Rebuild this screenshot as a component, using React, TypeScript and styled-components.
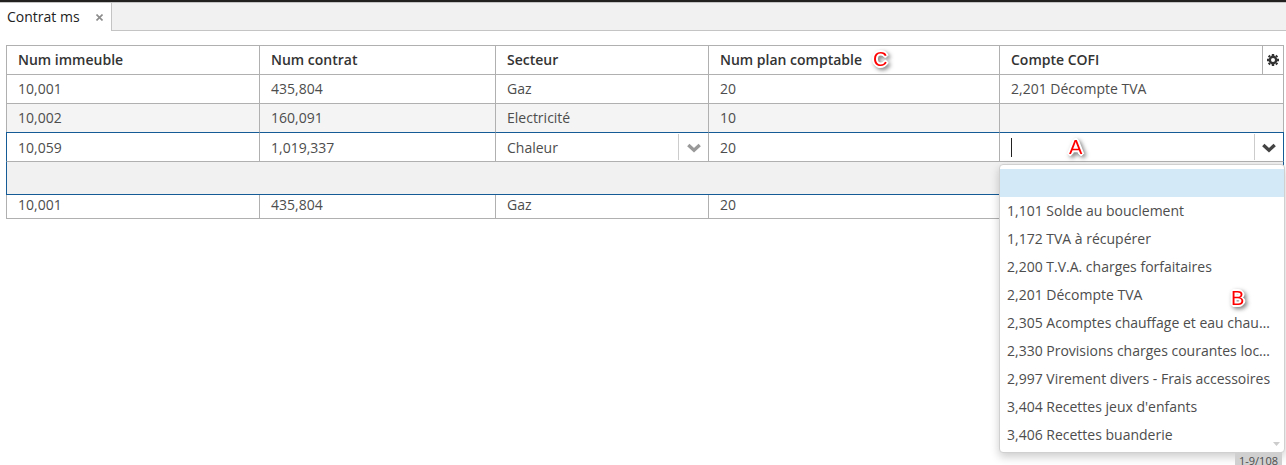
import React from "react";
import styled, { createGlobalStyle, css } from "styled-components";

const line = "#b0b0b0";
const accent = "#155b96";

const GlobalStyle = createGlobalStyle`
  *, *::before, *::after { box-sizing: border-box; }
  body {
    margin: 0;
    background: #fff;
    color: #4d4d4d;
    font-family: "Open Sans", "Noto Sans", sans-serif;
    font-size: 14px;
    line-height: 20px;
  }
  input, select, button { font: inherit; color: inherit; }
`;

const Page = styled.div`
  min-height: 100vh;
  overflow: hidden;
`;

const TabBar = styled.header`
  display: flex;
  height: 31px;
  border-top: 2px solid #232020;
  background: #f1f1f1;
`;

const Tab = styled.div`
  display: flex;
  align-items: center;
  gap: 14px;
  padding: 0 6px 0 7px;
  border-top: 1px solid #c4c4c4;
  border-right: 1px solid #c4c4c4;
  background: #fff;
  color: #222;
  font-weight: 500;
`;

const TabButton = styled.button`
  padding: 0;
  border: 0;
  background: none;
`;

const CloseButton = styled.button`
  display: flex;
  padding: 2px;
  border: 0;
  background: none;
  color: #8c8c8c;
`;

const TabFill = styled.div`
  flex: 1;
  border-top: 1px solid #c4c4c4;
  border-bottom: 1px solid #c4c4c4;
`;

const Content = styled.main`
  padding: 14px 2px 0 6px;
`;

const Grid = styled.table`
  width: 100%;
  table-layout: fixed;
  border-collapse: separate;
  border-spacing: 0;
`;

const Column = styled.col<{ $width?: number }>`
  width: ${(p) => (p.$width ? `${p.$width}px` : "auto")};
`;

const HeadCell = styled.th`
  height: 30px;
  padding: 0 0 0 11px;
  border: 1px solid ${line};
  border-right-width: 0;
  color: #333;
  font-weight: 600;
  text-align: left;
  &:last-child { border-right-width: 1px; }
`;

const HeadContent = styled.div`
  display: flex;
  align-items: center;
  justify-content: space-between;
  height: 28px;
`;

const HeadLabel = styled.span`
  position: relative;
`;

const SettingsButton = styled.button`
  display: flex;
  align-items: center;
  justify-content: center;
  width: 21px;
  height: 28px;
  padding: 0;
  border: 0;
  border-left: 1px solid ${line};
  background: none;
`;

type RowKind = "plain" | "shaded" | "last";

const Cell = styled.td<{ $kind: RowKind }>`
  height: 29px;
  padding: 0 0 0 11px;
  border-left: 1px solid ${line};
  border-bottom: 1px solid ${line};
  &:last-child { border-right: 1px solid ${line}; }
  ${(p) => p.$kind === "shaded" && css`
    height: 28px;
    border-bottom: 0;
    background: #f4f4f4;
  `}
  ${(p) => p.$kind === "last" && css`
    height: 24px;
    padding-bottom: 3px;
  `}
`;

const EditCell = styled.td`
  height: 30px;
  padding: 0;
  border-top: 1px solid ${accent};
  border-left: 1px solid ${line};
  border-bottom: 1px solid ${line};
  &:first-child { border-left-color: ${accent}; }
  &:last-child { border-right: 1px solid ${accent}; }
`;

const EditFooter = styled.td`
  height: 33px;
  border: 1px solid ${accent};
  border-top: 0;
  background: #f1f1f1;
`;

const Field = styled.div`
  position: relative;
  display: flex;
  height: 28px;
`;

const TextInput = styled.input`
  flex: 1;
  min-width: 0;
  padding: 2px 0 0 11px;
  border: 0;
  outline: 0;
  background: none;
`;

const Select = styled.select`
  flex: 1;
  min-width: 0;
  padding: 2px 0 0 11px;
  border: 0;
  outline: 0;
  appearance: none;
  background: none;
`;

const DropButton = styled.button<{ $active?: boolean }>`
  display: flex;
  align-items: center;
  justify-content: center;
  width: ${(p) => (p.$active ? 29 : 30)}px;
  height: 26px;
  margin-top: 1px;
  padding: 2px 0 0;
  border: 0;
  border-left: 1px solid #ccc;
  background: none;
  color: ${(p) => (p.$active ? "#444" : "#999")};
`;

const Caret = styled.span`
  position: absolute;
  top: 5px;
  left: 11px;
  width: 1px;
  height: 19px;
  background: #222;
`;

const Popup = styled.div`
  position: absolute;
  z-index: 1;
  top: 31px;
  left: -1px;
  right: -2px;
  padding: 4px 0 3px;
  border: 1px solid #d0d0d0;
  border-radius: 4px;
  background: #fff;
  box-shadow: 0 4px 10px rgba(0, 0, 0, 0.2);
`;

const OptionList = styled.ul`
  margin: 0;
  padding: 0;
  list-style: none;
`;

const Option = styled.li<{ $selected: boolean }>`
  height: 28px;
  padding: 4px 12px 4px 7px;
  overflow: hidden;
  text-overflow: ellipsis;
  white-space: nowrap;
  background: ${(p) => (p.$selected ? "#d3e9f7" : "transparent")};
`;

const MoreArrow = styled.svg`
  position: absolute;
  right: 4px;
  bottom: 5px;
`;

const Status = styled.div`
  position: absolute;
  top: 100%;
  right: 2px;
  padding: 0 4px;
  background: #d0d0d0;
  font-size: 11px;
  line-height: 18px;
`;

const Marker = styled.span<{ $left: number; $top: number }>`
  position: absolute;
  left: ${(p) => p.$left}px;
  top: ${(p) => p.$top}px;
  color: #f00;
  font-family: "Liberation Sans", Arial, sans-serif;
  font-size: 20px;
  font-weight: 400;
  line-height: 20px;
  text-shadow:
    -2px 0 #fff, 2px 0 #fff, 0 -2px #fff, 0 2px #fff,
    -1px -1px #fff, 1px -1px #fff, -1px 1px #fff, 1px 1px #fff;
  filter: drop-shadow(2px 2px 2px rgba(0, 0, 0, 0.5));
`;

const Chevron = () => (
  <svg width="14" height="10" viewBox="0 0 14 10" fill="none" stroke="currentColor" strokeWidth="3.4" aria-hidden="true">
    <path d="M1.300 2 7 7.200 12.700 2" />
  </svg>
);

const Gear = () => (
  <svg width="12" height="12" viewBox="0 0 12 12" fill="none" stroke="currentColor" aria-hidden="true">
    <circle cx="6" cy="6" r="3.2" strokeWidth="2.4" />
    <path strokeWidth="2.4" d="M6 0v2M6 10v2M0 6h2M10 6h2M1.7 1.7l1.3 1.3M9 9l1.3 1.3M10.3 1.7 9 3M3 9l-1.3 1.3" />
  </svg>
);

const columns = ["Num immeuble", "Num contrat", "Secteur", "Num plan comptable", "Compte COFI"];

const rows: { kind: RowKind; cells: string[] }[] = [
  { kind: "plain", cells: ["10,001", "435,804", "Gaz", "20", "2,201 Décompte TVA"] },
  { kind: "shaded", cells: ["10,002", "160,091", "Electricité", "10", ""] },
  { kind: "last", cells: ["10,001", "435,804", "Gaz", "20", ""] },
];

const accounts = [
  "",
  "1,101 Solde au bouclement",
  "1,172 TVA à récupérer",
  "2,200 T.V.A. charges forfaitaires",
  "2,201 Décompte TVA",
  "2,305 Acomptes chauffage et eau chaude",
  "2,330 Provisions charges courantes locataires",
  "2,997 Virement divers - Frais accessoires",
  "3,404 Recettes jeux d'enfants",
  "3,406 Recettes buanderie",
];

const DataRow = ({ kind, cells }: { kind: RowKind; cells: string[] }) => (
  <tr>
    {cells.map((text, i) => (
      <Cell key={i} $kind={kind}>{text}</Cell>
    ))}
  </tr>
);

const TextField = ({ label, value }: { label: string; value: string }) => (
  <EditCell>
    <Field>
      <TextInput aria-label={label} defaultValue={value} />
    </Field>
  </EditCell>
);

export default function App() {
  return (
    <Page>
      <GlobalStyle />
      <TabBar>
        <Tab>
          <TabButton type="button">Contrat ms</TabButton>
          <CloseButton type="button" aria-label="Fermer">
            <svg width="7" height="7" viewBox="0 0 7 7" stroke="currentColor" strokeWidth="1.6" aria-hidden="true">
              <path d="M.5.5l6 6M6.5.5l-6 6" />
            </svg>
          </CloseButton>
        </Tab>
        <TabFill />
      </TabBar>
      <Content>
        <Grid>
          <colgroup>
            <Column $width={253} />
            <Column $width={236} />
            <Column $width={213} />
            <Column $width={291} />
            <Column />
          </colgroup>
          <thead>
            <tr>
              {columns.map((name, i) => (
                <HeadCell key={name} scope="col">
                  <HeadContent>
                    <HeadLabel>
                      {name}
                      {i === 3 && <Marker $left={153} $top={-1}>C</Marker>}
                    </HeadLabel>
                    {i === 4 && (
                      <SettingsButton type="button" aria-label="Options">
                        <Gear />
                      </SettingsButton>
                    )}
                  </HeadContent>
                </HeadCell>
              ))}
            </tr>
          </thead>
          <tbody>
            <DataRow {...rows[0]} />
            <DataRow {...rows[1]} />
            <tr>
              <TextField label={columns[0]} value="10,059" />
              <TextField label={columns[1]} value="1,019,337" />
              <EditCell>
                <Field>
                  <Select aria-label={columns[2]} defaultValue="Chaleur">
                    <option>Chaleur</option>
                    <option>Electricité</option>
                    <option>Gaz</option>
                  </Select>
                  <DropButton type="button" aria-label="Ouvrir la liste des secteurs">
                    <Chevron />
                  </DropButton>
                </Field>
              </EditCell>
              <TextField label={columns[3]} value="20" />
              <EditCell>
                <Field>
                  <TextInput aria-label={columns[4]} role="combobox" aria-expanded="true" aria-controls="accounts" />
                  <Caret />
                  <Marker $left={69} $top={4}>A</Marker>
                  <DropButton type="button" $active aria-label="Ouvrir la liste des comptes">
                    <Chevron />
                  </DropButton>
                  <Popup>
                    <OptionList id="accounts" role="listbox">
                      {accounts.map((name, i) => (
                        <Option key={i} role="option" aria-selected={i === 0} $selected={i === 0}>{name}</Option>
                      ))}
                    </OptionList>
                    <MoreArrow width="7" height="5" viewBox="0 0 7 5" aria-hidden="true">
                      <path d="M0 0h7L3.500 4z" fill="#ccc" />
                    </MoreArrow>
                    <Marker $left={231} $top={123}>B</Marker>
                    <Status>1-9/108</Status>
                  </Popup>
                </Field>
              </EditCell>
            </tr>
            <tr>
              <EditFooter colSpan={5} />
            </tr>
            <DataRow {...rows[2]} />
          </tbody>
        </Grid>
      </Content>
    </Page>
  );
}
